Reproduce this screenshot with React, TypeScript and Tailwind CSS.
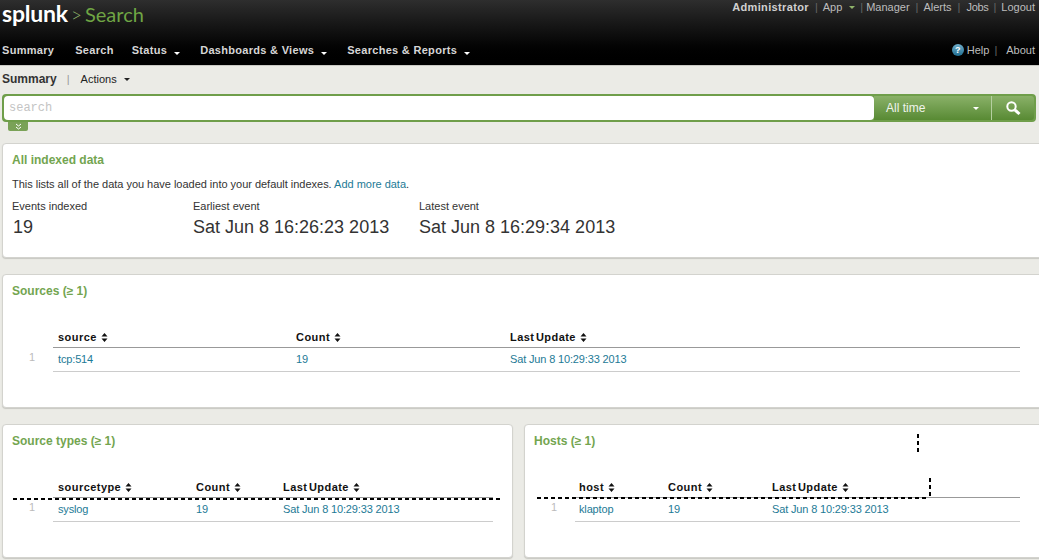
import React from "react";

const font = { fontFamily: '"Liberation Sans", Arial, sans-serif' };

function Caret({ className = "border-t-white" }: { className?: string }) {
  return (
    <span className={`ml-[7px] inline-block h-0 w-0 border-x-[3px] border-t-[3px] border-x-transparent align-[-1px] ${className}`} />
  );
}

function SortIcon() {
  return (
    <svg width="7" height="9" viewBox="0 0 7 9" className="ml-[4px] inline-block align-[-1px]">
      <path d="M3.5 0 L6.5 3.5 H0.5 Z M3.5 9 L0.5 5.5 H6.5 Z" fill="#111" />
    </svg>
  );
}

function Sep() {
  return <span className="text-[#666]">|</span>;
}

function Header() {
  return (
    <header className="h-[66px] border-b border-[#c9c9c4] bg-gradient-to-b from-[#2e2e2e] via-[#0a0a0a] via-[60%] to-black">
      <div className="flex h-[38px] items-start justify-between">
        <div className="flex items-baseline pl-[2px] font-['Lato',sans-serif] leading-[27px]">
          <span className="text-[23px] font-bold tracking-[-0.2px] text-white">splunk</span>
          <span className="ml-[3px] text-[19px] font-light text-[#8fb46a]">&gt;</span>
          <span className="ml-[3px] text-[20px] font-normal text-[#6fa544]">Search</span>
        </div>
        <div className="flex items-center pr-[4px] pt-[1px] text-[11px] leading-[13px] text-[#bdbdbd]">
          <span className="font-bold tracking-[0.35px] text-[#d0d0d0]">Administrator</span>
          <span className="ml-[6px] mr-[5px]"><Sep /></span>
          <span>App</span>
          <Caret className="border-t-[#8fb46a]" />
          <span className="ml-[5px] mr-[3px]"><Sep /></span>
          <span>Manager</span>
          <span className="ml-[6px] mr-[5px]"><Sep /></span>
          <span>Alerts</span>
          <span className="mx-[6px]"><Sep /></span>
          <span className="tracking-[-0.3px]">Jobs</span>
          <span className="mx-[5px]"><Sep /></span>
          <span>Logout</span>
        </div>
      </div>
      <div className="flex h-[24px] items-center justify-between text-[11px]">
        <nav className="flex items-center pl-[2px] font-bold tracking-[0.3px] text-[#d6d6d6]">
          <span>Summary</span>
          <span className="ml-[21px]">Search</span>
          <span className="ml-[18px]">Status<Caret /></span>
          <span className="ml-[20px]">Dashboards &amp; Views<Caret /></span>
          <span className="ml-[20px]">Searches &amp; Reports<Caret /></span>
        </nav>
        <div className="flex items-center pr-[4px] text-[#bdbdbd]">
          <span className="mr-[3px] flex h-[12px] w-[12px] items-center justify-center rounded-full bg-gradient-to-b from-[#6fb0cc] to-[#1c6d90] text-[9px] font-bold leading-none text-white">?</span>
          <span>Help</span>
          <span className="ml-[5px] mr-[9px]"><Sep /></span>
          <span>About</span>
        </div>
      </div>
    </header>
  );
}

function SearchBar() {
  return (
    <div className="relative ml-[2px] mr-[3px] flex h-[28px] rounded-[4px] border-2 border-[#6f9e4a] bg-[#6f9e4a]">
      <div className="flex-1 rounded-[4px] bg-white pl-[5px] font-['Liberation_Mono',monospace] text-[12px] leading-[24px] text-[#c4c4c4]">
        search
      </div>
      <div className="flex w-[117px] items-center justify-between bg-gradient-to-b from-[#8ab168] to-[#588a33] pl-[12px] pr-[12px] text-[12px] text-[#f0f4ec]">
        <span>All time</span>
        <span className="h-0 w-0 border-x-[3px] border-t-[3px] border-x-transparent border-t-white" />
      </div>
      <div className="flex w-[43px] items-center justify-center rounded-r-[3px] border-l border-[#b5cfa0] bg-gradient-to-b from-[#8ab168] to-[#588a33]">
        <svg width="16" height="16" viewBox="0 0 16 16" fill="none" stroke="#fff">
          <circle cx="6.5" cy="6.5" r="4.2" strokeWidth="2" />
          <path d="M9.8 9.8 L14.5 14" strokeWidth="3" />
        </svg>
      </div>
      <div className="absolute left-[4px] top-[26px] flex h-[9px] w-[20px] items-center justify-center rounded-b-[2px] bg-[#7aa257]">
        <svg width="7" height="7" viewBox="0 0 7 7" fill="none" stroke="#fff">
          <path d="M1 1 L3.5 3 L6 1 M1 4 L3.5 6 L6 4" />
        </svg>
      </div>
    </div>
  );
}

function Card({ className, children }: { className: string; children: React.ReactNode }) {
  return (
    <section className={`relative rounded-[4px] border border-[#d3d3ce] bg-white shadow-[0_1px_1px_#c8c8c3] ${className}`}>
      {children}
    </section>
  );
}

function Title({ children }: { children: React.ReactNode }) {
  return (
    <h2 className="pl-[9px] pt-[9px] text-[12px] font-bold leading-[14px] text-[#73a550]">{children}</h2>
  );
}

type TableProps = {
  cols: string[];
  row: string[];
  widths: string[];
  margin: string;
};

function ResultTable({ cols, row, widths, margin }: TableProps) {
  return (
    <div className={`relative mt-[32px] ${margin}`}>
      <span className="absolute left-[-24px] top-[21px] text-[11px] leading-[13px] text-[#bbb]">1</span>
      <div className="flex h-[18px] items-start border-b border-[#999] text-[11px] font-bold leading-[14px] tracking-[0.45px] text-[#111] [word-spacing:-2px]">
        {cols.map((c, i) => (
          <div key={c} className={widths[i]}>{c}<SortIcon /></div>
        ))}
      </div>
      <div className="flex h-[24px] items-center border-b border-[#ccc] text-[11px] tracking-[-0.15px] text-[#1d7a96]">
        {row.map((c, i) => (
          <div key={c} className={widths[i]}>{c}</div>
        ))}
      </div>
    </div>
  );
}

// the stray dashed selection lines in the screenshot
const dashH = "absolute h-[2px] bg-[repeating-linear-gradient(90deg,#000_0_4px,transparent_4px_7px)]";
const dashV = "absolute h-[21px] w-[2px] bg-[repeating-linear-gradient(180deg,#000_0_4px,transparent_4px_7px)]";

export default function App() {
  return (
    <div style={font} className="h-[560px] w-[1039px] overflow-hidden bg-[#ebebe6] text-[#333]">
      <Header />
      <div className="flex h-[28px] items-center pb-[2px] pl-[2px] text-[11px]">
        <span className="text-[12px] font-bold text-[#333]">Summary</span>
        <span className="ml-[10px] mr-[11px] text-[#999]">|</span>
        <span className="text-[#222]">Actions</span>
        <Caret className="border-t-[#222]" />
      </div>
      <SearchBar />

      <Card className="ml-[2px] mr-[-4px] mt-[21px] h-[115px]">
        <Title>All indexed data</Title>
        <p className="pl-[9px] pt-[11px] text-[11px] leading-[13px] tracking-[-0.02px] text-[#333]">
          This lists all of the data you have loaded into your default indexes. <a className="text-[#1d7a96]">Add more data</a>.
        </p>
        <div className="flex pl-[9px] pt-[9px]">
          <div className="w-[181px]">
            <div className="text-[11px] leading-[13px]">Events indexed</div>
            <div className="pl-[1px] pt-[4px] text-[18px] leading-[20px]">19</div>
          </div>
          <div className="w-[226px]">
            <div className="text-[11px] leading-[13px]">Earliest event</div>
            <div className="pt-[4px] text-[18px] leading-[20px]">Sat Jun 8 16:26:23 2013</div>
          </div>
          <div>
            <div className="text-[11px] leading-[13px]">Latest event</div>
            <div className="pt-[4px] text-[18px] leading-[20px]">Sat Jun 8 16:29:34 2013</div>
          </div>
        </div>
      </Card>

      <Card className="ml-[2px] mr-[-4px] mt-[16px] h-[134px]">
        <Title>Sources (≥ 1)</Title>
        <ResultTable
          margin="ml-[50px] mr-[22px]"
          cols={["source", "Count", "Last Update"]}
          row={["tcp:514", "19", "Sat Jun 8 10:29:33 2013"]}
          widths={["w-[243px] pl-[5px]", "w-[214px]", "flex-1"]}
        />
      </Card>

      <div className="mt-[16px] flex gap-[11px] pl-[2px]">
        <Card className="h-[134px] w-[511px]">
          <Title>Source types (≥ 1)</Title>
          <ResultTable
            margin="ml-[50px] mr-[19px]"
            cols={["sourcetype", "Count", "Last Update"]}
            row={["syslog", "19", "Sat Jun 8 10:29:33 2013"]}
            widths={["w-[143px] pl-[5px]", "w-[87px]", "flex-1"]}
          />
          <div className={`${dashH} left-[10px] top-[73px] w-[490px]`} />
        </Card>
        <Card className="mr-[-4px] h-[134px] flex-1">
          <Title>Hosts (≥ 1)</Title>
          <ResultTable
            margin="ml-[50px] mr-[22px]"
            cols={["host", "Count", "Last Update"]}
            row={["klaptop", "19", "Sat Jun 8 10:29:33 2013"]}
            widths={["w-[93px] pl-[4px]", "w-[104px]", "flex-1"]}
          />
          <div className={`${dashH} left-[12px] top-[72px] w-[392px]`} />
          <div className={`${dashV} left-[392px] top-[9px]`} />
          <div className={`${dashV} left-[404px] top-[53px]`} />
        </Card>
      </div>
    </div>
  );
}
